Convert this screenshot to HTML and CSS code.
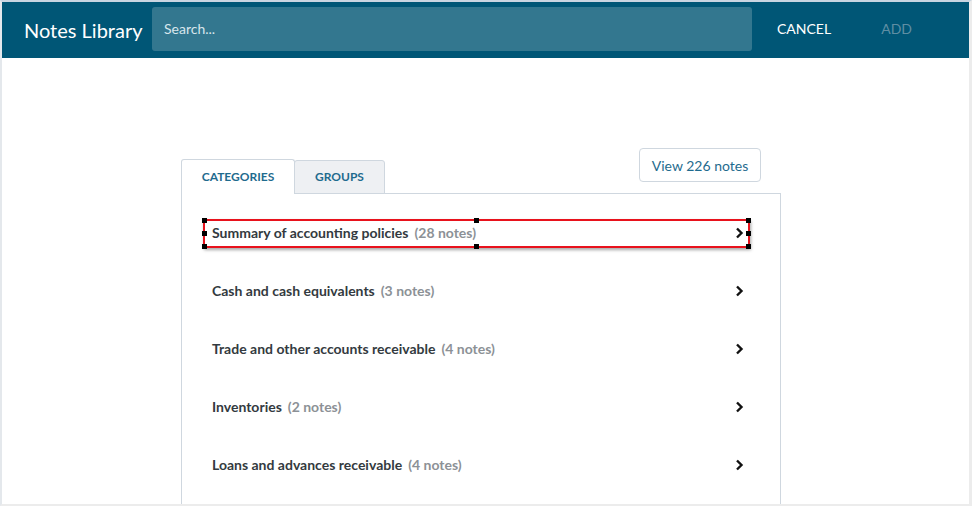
FILE: index.html
```html
<!DOCTYPE html>
<html>
<head>
<meta charset="utf-8">
<link rel="stylesheet" href="styles.css">
</head>
<body>
<div class="frame">
  <header class="topbar">
    <div class="title">Notes Library</div>
    <div class="search">Search...</div>
    <div class="actions">
      <span class="btn-cancel">CANCEL</span>
      <span class="btn-add">ADD</span>
    </div>
  </header>
  <main class="content">
    <div class="library">
      <div class="tabbar">
        <div class="tab active">CATEGORIES</div>
        <div class="tab">GROUPS</div>
        <div class="spacer"></div>
        <div class="view-btn">View 226 notes</div>
      </div>
      <div class="panel">
        <div class="row selected">
          <span class="name">Summary of accounting policies</span><span class="count">(28 notes)</span>
          <svg class="chev" viewBox="0 0 9 12" width="9" height="12"><path d="M2 1.5 L6.5 6 L2 10.5" fill="none" stroke="#111" stroke-width="2.4"/></svg>
          <div class="sel-box">
            <i class="h tl"></i><i class="h tm"></i><i class="h tr"></i>
            <i class="h ml"></i><i class="h mr"></i>
            <i class="h bl"></i><i class="h bm"></i><i class="h br"></i>
          </div>
        </div>
        <div class="row">
          <span class="name">Cash and cash equivalents</span><span class="count">(3 notes)</span>
          <svg class="chev" viewBox="0 0 9 12" width="9" height="12"><path d="M2 1.5 L6.5 6 L2 10.5" fill="none" stroke="#111" stroke-width="2.4"/></svg>
        </div>
        <div class="row">
          <span class="name">Trade and other accounts receivable</span><span class="count">(4 notes)</span>
          <svg class="chev" viewBox="0 0 9 12" width="9" height="12"><path d="M2 1.5 L6.5 6 L2 10.5" fill="none" stroke="#111" stroke-width="2.4"/></svg>
        </div>
        <div class="row">
          <span class="name">Inventories</span><span class="count">(2 notes)</span>
          <svg class="chev" viewBox="0 0 9 12" width="9" height="12"><path d="M2 1.5 L6.5 6 L2 10.5" fill="none" stroke="#111" stroke-width="2.4"/></svg>
        </div>
        <div class="row">
          <span class="name">Loans and advances receivable</span><span class="count">(4 notes)</span>
          <svg class="chev" viewBox="0 0 9 12" width="9" height="12"><path d="M2 1.5 L6.5 6 L2 10.5" fill="none" stroke="#111" stroke-width="2.4"/></svg>
        </div>
      </div>
    </div>
  </main>
</div>
</body>
</html>
```

FILE: styles.css
```css
* { box-sizing: border-box; }
html, body { margin: 0; padding: 0; }
body {
  font-family: Lato, "Open Sans", Arial, sans-serif;
  background: #efefef;
  width: 972px;
  height: 506px;
  overflow: hidden;
}
.frame {
  width: 972px;
  height: 506px;
  border-top: 2px solid #c9d5e1;
  border-left: 2px solid #e4e8ec;
  border-right: 3px solid #ececec;
  border-bottom: 2px solid #ececec;
  background: #fff;
  display: flex;
  flex-direction: column;
  overflow: hidden;
}
.topbar {
  height: 56px;
  flex: none;
  background: #005676;
  display: flex;
  align-items: center;
  padding-left: 22px;
}
.title {
  color: #fff;
  font-size: 20px;
  width: 128px;
  flex: none;
  margin-top: -1px;
}
.search {
  width: 600px;
  height: 44px;
  margin-top: -3px;
  background: #33778f;
  border-radius: 3px;
  color: #d8e6ec;
  font-size: 14px;
  display: flex;
  align-items: center;
  padding-left: 12px;
  flex: none;
}
.actions {
  display: flex;
  align-items: center;
  margin-top: -3px;
}
.btn-cancel {
  color: #fff;
  font-size: 14px;
  margin-left: 25px;
}
.btn-add {
  color: #5f8ea3;
  font-size: 14px;
  margin-left: 50px;
}
.content {
  flex: 1;
  padding-top: 90px;
  padding-left: 179px;
}
.library {
  width: 600px;
}
.tabbar {
  display: flex;
  align-items: flex-end;
  height: 45px;
}
.tab {
  height: 35px;
  border: 1px solid #cfd7df;
  border-bottom: none;
  border-radius: 3px 3px 0 0;
  font-size: 12px;
  font-weight: 700;
  color: #1f6b8e;
  display: flex;
  align-items: center;
  justify-content: center;
  margin-bottom: -1px;
  padding-bottom: 1px;
  position: relative;
}
.tab.active {
  width: 114px;
  background: #fff;
  z-index: 1;
}
.tab:not(.active) {
  width: 91px;
  background: #eef0f3;
  margin-left: -1px;
  height: 34px;
  border-bottom: 1px solid #cfd7df;
}
.spacer { flex: 1; }
.view-btn {
  align-self: flex-start;
  margin-right: 20px;
  height: 34px;
  width: 122px;
  border: 1px solid #cfd7df;
  border-radius: 4px;
  font-size: 14px;
  color: #1f6b8e;
  display: flex;
  align-items: center;
  justify-content: center;
}
.panel {
  border: 1px solid #cfd7df;
  border-bottom: none;
  height: 320px;
  padding: 9px 30px 0 21px;
}
.row {
  position: relative;
  height: 58px;
  display: flex;
  align-items: center;
  padding: 0 6px 0 9px;
  font-size: 14px;
}
.name {
  font-weight: 700;
  color: #333a40;
}
.count {
  font-weight: 700;
  color: #8c9196;
  margin-left: 6px;
}
.chev {
  margin-left: auto;
  margin-top: 2px;
}
.sel-box {
  position: absolute;
  left: 0;
  right: 0;
  top: 16px;
  height: 29px;
  border: 2px solid #e8121c;
  box-shadow: 1px 2px 3px rgba(0,0,0,0.35);
}
.h {
  position: absolute;
  width: 5px;
  height: 5px;
  background: #000;
}
.tl { left: -3px; top: -3px; }
.tm { left: calc(50% - 3px); top: -3px; }
.tr { right: -3px; top: -3px; }
.ml { left: -3px; top: calc(50% - 3px); }
.mr { right: -3px; top: calc(50% - 3px); }
.bl { left: -3px; bottom: -3px; }
.bm { left: calc(50% - 3px); bottom: -3px; }
.br { right: -3px; bottom: -3px; }
```
